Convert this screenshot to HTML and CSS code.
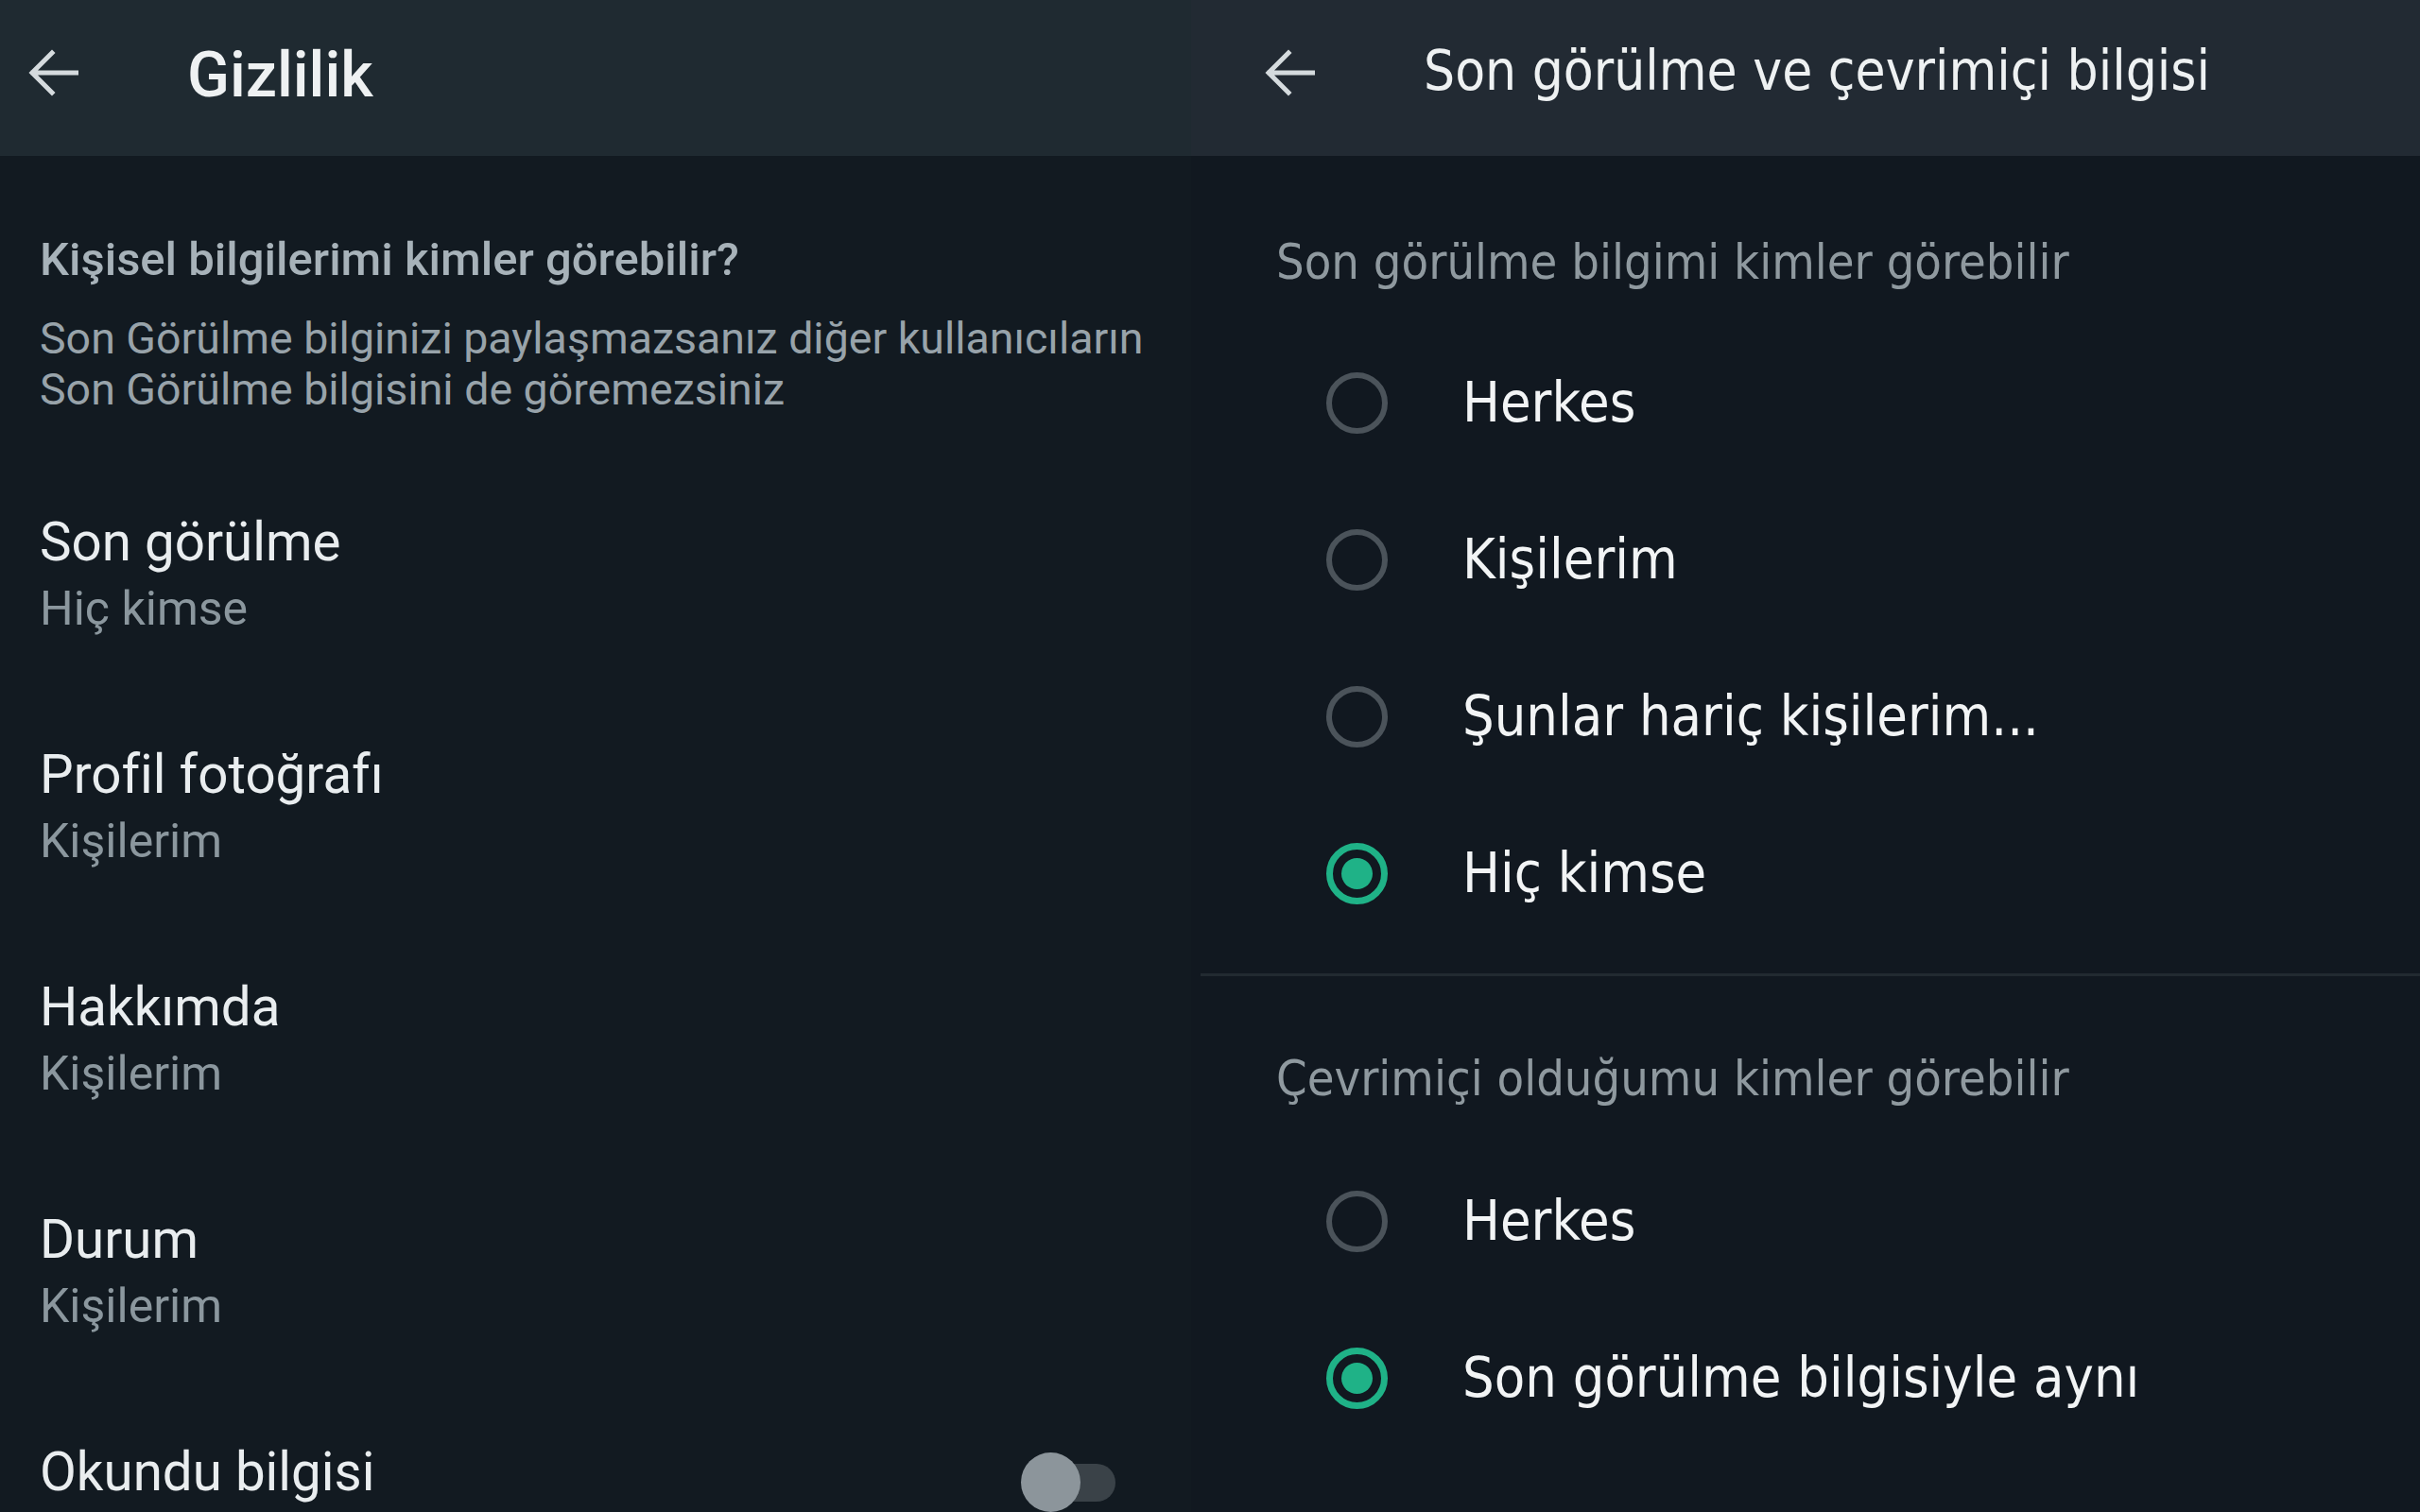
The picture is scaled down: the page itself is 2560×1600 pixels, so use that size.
FILE: index.html
```html
<!DOCTYPE html>
<html lang="tr">
<head>
<meta charset="utf-8">
<title>Gizlilik</title>
<link rel="stylesheet" href="styles.css">
</head>
<body>
<div class="screen">
  <section class="panel left">
    <header class="bar bar-left">
      <svg class="back" viewBox="0 0 54 54" width="54" height="54"><path d="M52 27H6M26 6L5 27l21 21" fill="none" stroke="#d5dbde" stroke-width="5" stroke-linecap="square"/></svg>
      <h1 class="title-left">Gizlilik</h1>
    </header>
    <div class="content-left">
      <div class="intro">
        <div class="intro-head">Kişisel bilgilerimi kimler görebilir?</div>
        <div class="intro-desc">Son Görülme bilginizi paylaşmazsanız diğer kullanıcıların<br>Son Görülme bilgisini de göremezsiniz</div>
      </div>
      <div class="item"><div class="item-title">Son görülme</div><div class="item-sub">Hiç kimse</div></div>
      <div class="item"><div class="item-title">Profil fotoğrafı</div><div class="item-sub">Kişilerim</div></div>
      <div class="item"><div class="item-title">Hakkımda</div><div class="item-sub">Kişilerim</div></div>
      <div class="item"><div class="item-title">Durum</div><div class="item-sub">Kişilerim</div></div>
      <div class="item item-toggle">
        <div class="item-title">Okundu bilgisi</div>
        <div class="toggle"><span class="track"></span><span class="thumb"></span></div>
      </div>
    </div>
  </section>
  <section class="panel right">
    <header class="bar bar-right">
      <svg class="back" viewBox="0 0 54 54" width="54" height="54"><path d="M52 27H6M26 6L5 27l21 21" fill="none" stroke="#d5dbde" stroke-width="5" stroke-linecap="square"/></svg>
      <h1 class="title-right">Son görülme ve çevrimiçi bilgisi</h1>
    </header>
    <div class="groups">
      <div class="group group-first">
        <div class="group-head">Son görülme bilgimi kimler görebilir</div>
        <div class="option"><span class="radio"></span><span class="opt-label">Herkes</span></div>
        <div class="option"><span class="radio"></span><span class="opt-label">Kişilerim</span></div>
        <div class="option"><span class="radio"></span><span class="opt-label">Şunlar hariç kişilerim...</span></div>
        <div class="option"><span class="radio on"></span><span class="opt-label">Hiç kimse</span></div>
      </div>
      <div class="group group-second">
        <div class="group-head">Çevrimiçi olduğumu kimler görebilir</div>
        <div class="option"><span class="radio"></span><span class="opt-label">Herkes</span></div>
        <div class="option"><span class="radio on"></span><span class="opt-label">Son görülme bilgisiyle aynı</span></div>
      </div>
    </div>
  </section>
</div>
</body>
</html>
```
FILE: styles.css
```css
* { box-sizing: border-box; }
html, body { margin: 0; padding: 0; }
body { width: 2560px; height: 1600px; overflow: hidden; background: #111920; }
.screen { display: flex; width: 2560px; height: 1600px; }
.panel { display: flex; flex-direction: column; height: 1600px; overflow: hidden; }
.left { width: 1260px; background: #121a21; font-family: Roboto, "Liberation Sans", sans-serif; }
.right { flex: 1; background: #111820; font-family: "DejaVu Sans Condensed", "DejaVu Sans", sans-serif; font-stretch: condensed; }

.bar { height: 165px; flex: none; display: flex; align-items: center; }
.bar-left { background: #1f2a31; padding-left: 29px; }
.bar-right { background: #222a33; padding-left: 77px; }
.back { flex: none; display: block; margin-top: -12px; }
.title-left { margin: 0 0 0 115px; font-size: 66px; font-weight: 500; color: #eef1f2; margin-top: -6px; }
.title-right { margin: 0 0 0 115px; font-size: 58px; font-weight: normal; color: #eef1f2; margin-top: -16px; }

.content-left { padding-left: 42px; }
.intro { padding-top: 80px; }
.intro-head { font-size: 49px; font-weight: 500; color: #a7b2b9; line-height: 60px; }
.intro-desc { margin-top: 26px; font-size: 46.5px; color: #98a3aa; line-height: 54px; }
.item { height: 246px; padding-top: 100px; }
.item-title { font-size: 56.5px; color: #e9edef; line-height: 70px; }
.item-sub { font-size: 50px; color: #8b979e; line-height: 70px; }
.item-toggle { display: flex; justify-content: space-between; align-items: flex-start; padding-right: 80px; }
.toggle { position: relative; width: 100px; height: 64px; margin-top: 14px; }
.track { position: absolute; left: 14px; right: 0; top: 12px; height: 40px; border-radius: 20px; background: #3a4248; }
.thumb { position: absolute; left: 0; top: 0; width: 63px; height: 63px; border-radius: 50%; background: #8c959b; }

.groups { padding-left: 10px; }
.group-head { padding-left: 80px; font-size: 52px; color: #8f999f; line-height: 60px; }
.group-first { padding-top: 82px; border-bottom: 3px solid #222a31; height: 868px; }
.group-second { padding-top: 78px; }
.group-first .group-head { margin-bottom: 36px; }
.group-second .group-head { margin-bottom: 38px; }
.option { display: flex; align-items: center; height: 166px; padding-left: 133px; }
.radio { flex: none; width: 65px; height: 65px; border-radius: 50%; border: 6px solid #4b535a; position: relative; }
.radio.on { border: 7px solid #1fb287; }
.radio.on::after { content: ""; position: absolute; left: 9px; top: 9px; width: 33px; height: 33px; border-radius: 50%; background: #1fb287; }
.opt-label { margin-left: 79px; font-size: 59px; color: #f2f4f5; line-height: 70px; }
```
